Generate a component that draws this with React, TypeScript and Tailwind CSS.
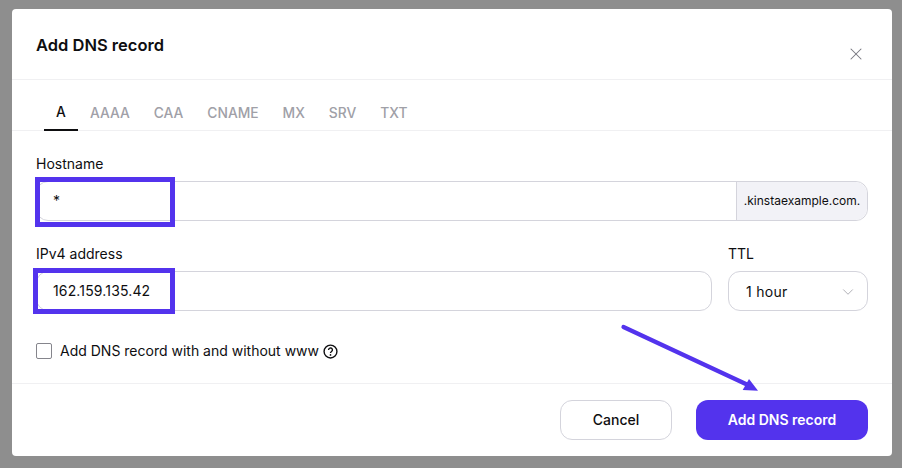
import { ChevronDown, X } from 'lucide-react'

const tabs = ['A', 'AAAA', 'CAA', 'CNAME', 'MX', 'SRV', 'TXT']

function Highlight({ className }: { className: string }) {
  return <div className={`pointer-events-none absolute border-[5px] border-[#5333ed] ${className}`} />
}

export default function App() {
  return (
    <div className="h-[468px] w-[902px] overflow-hidden bg-[#8e8e8e] pl-3 pr-2.5 pt-[9px] font-['Inter',sans-serif] text-[#0e0e10]">
      <div className="relative flex h-[447px] w-[880px] flex-col rounded bg-white">
        <div className="flex h-[71px] shrink-0 justify-between border-b border-[#f0f0f2] pl-6 pr-[28px]">
          <h1 className="mt-[25px] text-[16.5px] leading-[22px] font-semibold">Add DNS record</h1>
          <X size={16} strokeWidth={1.25} className="mt-[37px] scale-125 text-[#77777f]" />
        </div>

        <div className="flex h-[51px] shrink-0 items-end border-b border-[#f0f0f2] pl-8">
          {tabs.map((tab, i) => (
            <div
              key={tab}
              className={`-mb-px flex h-[42px] items-center pt-1.5 text-[13.8px] font-medium ${
                i === 0
                  ? 'w-[34px] justify-center border-b-2 border-[#0e0e10] text-[#0e0e10]'
                  : 'mx-3 text-[#a0a0a7]'
              }`}
            >
              {tab}
            </div>
          ))}
        </div>

        <div className="flex flex-1 flex-col px-6 pt-6">
          <label className="block text-sm leading-[18px]">Hostname</label>
          <div className="mt-2 flex h-10 rounded-xl border border-[#d4d4dc]">
            <div className="flex flex-1 items-center pl-4 text-sm">*</div>
            <div className="flex w-[131px] items-center justify-center rounded-r-xl border-l border-[#d4d4dc] bg-[#f2f2f7] text-xs">
              .kinstaexample.com.
            </div>
          </div>

          <div className="mt-6 flex gap-4">
            <div className="flex-1">
              <label className="block text-sm leading-[18px]">IPv4 address</label>
              <div className="mt-2 flex h-10 items-center rounded-xl border border-[#d4d4dc] pl-4 text-sm tracking-[0.15px]">
                162.159.135.42
              </div>
            </div>
            <div className="w-[140px]">
              <label className="block text-sm leading-[18px]">TTL</label>
              <div className="mt-2 flex h-10 items-center justify-between rounded-xl border border-[#d4d4dc] pl-[17px] pr-[10px] pt-0.5 text-sm tracking-[0.3px]">
                1 hour
                <ChevronDown size={18} strokeWidth={0.9} className="text-[#8b8b93]" />
              </div>
            </div>
          </div>

          <div className="mt-8 flex items-center text-sm leading-4">
            <div className="h-4 w-4 rounded-[2px] border border-[#85858c]" />
            <span className="ml-2">Add DNS record with and without www</span>
            <svg width="15" height="15" viewBox="0 0 14 14" fill="none" className="ml-[4px]">
              <circle cx="7" cy="7" r="6" stroke="#0e0e10" strokeWidth="1.3" />
              <path d="M5.2 5.500a1.8 1.800 0 1 1 2.800 1.500c-.6.4-1 .7-1 1.300" stroke="#0e0e10" strokeWidth="1.300" />
              <circle cx="7" cy="10.200" r=".8" fill="#0e0e10" />
            </svg>
          </div>
        </div>

        <div className="flex h-[73px] shrink-0 justify-end gap-6 border-t border-[#f0f0f2] pt-4 pr-6">
          <button className="h-10 w-[112px] rounded-xl border border-[#d4d4dc] bg-white text-sm font-medium">Cancel</button>
          <button className="h-10 w-[172px] rounded-xl bg-[#5333ed] text-sm font-semibold text-white">Add DNS record</button>
        </div>

        <Highlight className="left-[23px] top-[168px] h-[50px] w-[140px]" />
        <Highlight className="left-[21px] top-[259px] h-[46px] w-[142px]" />

        <svg width="160" height="80" viewBox="0 0 160 80" fill="none" className="pointer-events-none absolute left-[600px] top-[310px]">
          <path d="M11.500 8 L136 66" stroke="#5333ed" strokeWidth="4.200" strokeLinecap="round" />
          <path d="M137 60 L146 71.700 L130.700 71 Z" fill="#5333ed" />
        </svg>
      </div>
    </div>
  )
}
